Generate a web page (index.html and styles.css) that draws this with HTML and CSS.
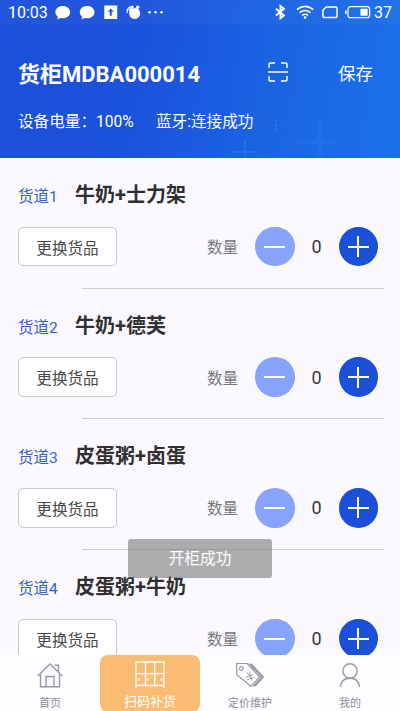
FILE: index.html
```
<!DOCTYPE html>
<html lang="zh-CN">
<head>
<meta charset="utf-8">
<title>扫码补货</title>
<link rel="stylesheet" href="styles.css">
</head>
<body>
<div class="app">
  <header class="header">
    <svg class="sparkles" width="400" height="158" viewBox="0 0 400 158" fill="#439cf0">
      <path opacity=".12" d="M317 119h6v21h15v4h-15v14h-6v-14h-20v-4h20z"/>
      <path opacity=".25" d="M244 139h2v12h12v2h-12v5h-2v-5h-12v-2h12z"/>
      <path opacity=".2" d="M275 120h2v5h6v1h-6v6h-2v-6h-6v-1h6z"/>
    </svg>
    <div class="status">
      <span class="time">10:03</span>
      <svg class="status-left" width="112" height="24" viewBox="0 0 112 24" fill="#fff">
        <path id="bubble" d="M10.8 6c4.200 0 7.400 2.700 7.400 6.200s-3.200 6.100-7.400 6.100l-1.800-.2c-1.500.8-3 .9-4.200.6.800-.6 1.100-1.300 1-2-1.500-1.100-2.400-2.700-2.400-4.500C3.400 8.700 6.600 6 10.800 6z"/>
        <use href="#bubble" x="24.500"/>
        <path fill-rule="evenodd" d="M52.500 5.500h13V19h-13zM59 8.500l-3 3.300h2v4h2v-4h2z"/>
        <circle cx="83" cy="13.500" r="5.500"/>
        <circle cx="86" cy="7.300" r="1.800"/>
        <path d="M75.500 13c-1-4 2-6.500 6-7M77.500 11c.6-2 2-3.500 4.500-4" fill="none" stroke="#fff" stroke-width="1.300"/>
        <circle cx="98" cy="12.300" r="1.300"/><circle cx="104" cy="12.300" r="1.300"/><circle cx="110" cy="12.300" r="1.300"/>
      </svg>
      <svg class="status-right" width="100" height="24" viewBox="0 0 100 24" fill="none" stroke="#fff">
        <path stroke-width="1.900" d="M5 8.700l8 6.800-3.500 2.800V6l3.500 2.800-8 6.800"/>
        <path stroke-width="1.600" d="M26 9.700q8.200-6.600 16.400 0M28.700 12.600q5.500-4.200 11 0M31.300 15.300q2.900-2 5.800 0"/>
        <circle cx="34.200" cy="17.500" r="1.300" fill="#fff" stroke="none"/>
        <path stroke-width="1.500" d="M55.500 7H65q1.300 0 1.300 1.300v8q0 1.200-1.300 1.200H53.400q-1.300 0-1.300-1.200v-6z"/>
        <rect x="77.300" y="6.700" width="21.700" height="11" rx="2.500" stroke-width="1.200"/>
        <path d="M75.200 10.500v3.600" stroke-width="1.500"/>
        <rect x="89.800" y="8.700" width="7.200" height="7" fill="#fff" stroke="none"/>
      </svg>
      <span class="percent">37</span>
    </div>
    <div class="title-row">
      <h1 class="title">货柜MDBA000014</h1>
      <svg class="scan" width="20" height="20" viewBox="0 0 20 20" fill="none" stroke="#fff" stroke-width="1.500">
        <path d="M1 6V2.300Q1 1 2.300 1H7M13 1h4.700Q19 1 19 2.300V6M1 14v3.700Q1 19 2.300 19H7M13 19h4.700q1.300 0 1.300-1.300V14M0 10h20"/>
      </svg>
      <span class="save">保存</span>
    </div>
    <div class="info"><span class="power">设备电量：100%</span><span>蓝牙:连接成功</span></div>
  </header>

  <main class="list">
    <section class="lane">
      <div class="lane-head"><span class="lane-no">货道1</span><h2 class="goods">牛奶+士力架</h2></div>
      <div class="lane-body">
        <button class="change">更换货品</button><span class="label">数量</span>
        <button class="round minus"></button><span class="count">0</span><button class="round plus"></button>
      </div>
    </section>
    <section class="lane">
      <div class="lane-head"><span class="lane-no">货道2</span><h2 class="goods">牛奶+德芙</h2></div>
      <div class="lane-body">
        <button class="change">更换货品</button><span class="label">数量</span>
        <button class="round minus"></button><span class="count">0</span><button class="round plus"></button>
      </div>
    </section>
    <section class="lane">
      <div class="lane-head"><span class="lane-no">货道3</span><h2 class="goods">皮蛋粥+卤蛋</h2></div>
      <div class="lane-body">
        <button class="change">更换货品</button><span class="label">数量</span>
        <button class="round minus"></button><span class="count">0</span><button class="round plus"></button>
      </div>
    </section>
    <section class="lane">
      <div class="lane-head"><span class="lane-no">货道4</span><h2 class="goods">皮蛋粥+牛奶</h2></div>
      <div class="lane-body">
        <button class="change">更换货品</button><span class="label">数量</span>
        <button class="round minus"></button><span class="count">0</span><button class="round plus"></button>
      </div>
    </section>
  </main>

  <div class="toast">开柜成功</div>

  <nav class="tabs">
    <a class="tab">
      <svg width="28" height="28" viewBox="0 0 28 28" fill="none" stroke="#9996aa" stroke-width="1.400">
        <path d="M1.800 15L14 3l12.200 12M4.500 13.500v12.300h19V13.500M10 25.800V15.500h8v10.300M18.500 4.200h4v6"/>
      </svg>
      <span>首页</span>
    </a>
    <a class="tab active">
      <svg width="32" height="28" viewBox="0 0 32 28" fill="none" stroke="#fff" stroke-width="1.300">
        <path d="M2 27V1h28v26M2 24.500h28M2 12.700h28M11.500 1v23.500M20.700 1v23.500M4.800 17v3M14 17v3M27.500 17v3"/>
      </svg>
      <span>扫码补货</span>
    </a>
    <a class="tab">
      <svg width="30" height="28" viewBox="0 0 30 28" fill="none" stroke="#9996aa" stroke-width="1.200">
        <path d="M1.700 2.500h10.500L24.500 16 16 25.500 1.700 13.500zM14.200 2.500L26.700 16l-8.500 9.500M16.300 3L28.500 16l-8.300 9"/>
        <circle cx="6.300" cy="7.500" r="1.800"/>
        <path stroke-width="1" d="M11.500 11.500l3.300 3 .3-3.800M14.800 14.500l2.500 5M10.800 16l7-2.200M12.500 18.500l6-2"/>
      </svg>
      <span>定价维护</span>
    </a>
    <a class="tab">
      <svg width="24" height="28" viewBox="0 0 24 28" fill="none" stroke="#9996aa" stroke-width="1.400">
        <circle cx="12" cy="10" r="7.200"/><path d="M2.500 26c.5-5.500 4-8.800 9.500-8.800s9 3.300 9.500 8.800"/>
      </svg>
      <span>我的</span>
    </a>
  </nav>
</div>
</body>
</html>
```

FILE: styles.css
```
* { box-sizing: border-box; }
body { margin: 0; font-family: Roboto, "Noto Sans CJK SC", sans-serif; }
.app {
  position: relative;
  width: 400px;
  height: 711px;
  overflow: hidden;
  background: #fbf9fd;
  display: flex;
  flex-direction: column;
}
.header {
  position: relative;
  flex: none;
  height: 158px;
  color: #fff;
  background: linear-gradient(100deg, #1b50d8 0%, #1b52da 35%, #1a63e3 65%, #1b70ea 100%);
}
.sparkles { position: absolute; left: 0; top: 0; }
.status {
  position: relative;
  display: flex;
  align-items: center;
  height: 24px;
  padding: 0 8px;
  background: rgba(255, 255, 255, .03);
  font-size: 16px;
}
.time { width: 44px; padding-top: 1px; }
.status-right { margin-left: 107.500px; }
.percent { margin-left: 3.500px; padding-top: 1px; white-space: nowrap; }
.title-row {
  position: relative;
  display: flex;
  align-items: center;
  height: 40px;
  margin-top: 28px;
  padding-left: 18px;
}
.title { width: 250px; margin: 0; font-size: 22px; font-weight: 700; white-space: nowrap; }
.save { margin-left: 50px; font-size: 17.500px; }
.info {
  position: relative;
  display: flex;
  margin-top: 19px;
  padding-left: 18px;
  font-size: 15.600px;
  line-height: 22px;
}
.power { width: 138px; }
.list { flex: 1; min-height: 0; overflow: hidden; }
.lane {
  height: 130.700px;
  padding: 21px 0 0 18px;
  background: linear-gradient(#cfcdd1, #cfcdd1) 82px bottom / 302px 1px no-repeat;
}
.lane-head { display: flex; align-items: center; height: 32px; }
.lane-no { width: 57px; color: #3360cf; font-size: 15.500px; }
.goods { margin: 0; font-size: 20px; line-height: 30px; font-weight: 700; color: #303033; }
.lane-body { display: flex; align-items: center; margin-top: 15.500px; height: 40px; }
button { padding: 0; border: 0; font-family: inherit; }
.change {
  width: 99px;
  height: 39.500px;
  border: 1px solid #c8c7ca;
  border-radius: 5px;
  background: #fff;
  color: #49494c;
  font-size: 15.600px;
}
.label { width: 48px; margin-left: 90px; padding-bottom: 1px; color: #77777a; font-size: 15.500px; }
.round {
  flex: none;
  width: 39.500px;
  height: 39.500px;
  border-radius: 50%;
  background-repeat: no-repeat;
  background-position: center;
}
.minus {
  background-color: #86a3fd;
  background-image: linear-gradient(#fff, #fff);
  background-size: 21px 2px;
}
.plus {
  background-color: #1b4fd7;
  background-image: linear-gradient(#fff, #fff), linear-gradient(#fff, #fff);
  background-size: 21px 2px, 2px 21px;
}
.count { width: 44px; text-align: center; color: #39393c; font-size: 18px; }
.toast {
  position: absolute;
  left: 128px;
  top: 539px;
  width: 144px;
  height: 38.500px;
  border-radius: 3px;
  background: rgba(120, 120, 122, .6);
  color: #fff;
  font-size: 15.700px;
  line-height: 40px;
  text-align: center;
}
.tabs {
  position: absolute;
  left: 0;
  bottom: 0;
  display: grid;
  grid-template-columns: repeat(4, 100px);
  width: 400px;
  height: 56px;
  border-radius: 8px 8px 0 0;
  background: #fefdff;
}
.tab {
  display: flex;
  flex-direction: column;
  align-items: center;
  padding-top: 6px;
  color: #8f8d9b;
  font-size: 11px;
  line-height: 16px;
}
.tab span { margin-top: 7px; }
.active { border-radius: 8px; background: #fabb72; color: #fff; font-size: 13px; }
.active span { margin-top: 5px; }
```
